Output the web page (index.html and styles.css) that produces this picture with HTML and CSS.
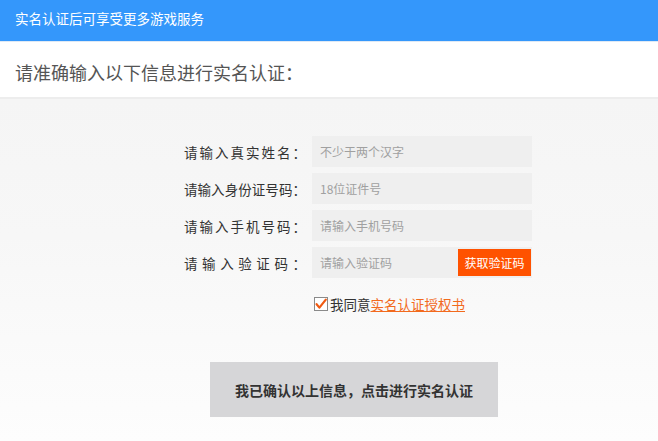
FILE: index.html
```html
<!DOCTYPE html>
<html lang="zh-CN">
<head>
<meta charset="utf-8">
<title>实名认证</title>
<link rel="stylesheet" href="styles.css">
</head>
<body>
<header class="topbar">实名认证后可享受更多游戏服务</header>
<section class="intro">请准确输入以下信息进行实名认证：</section>
<main class="content">
  <form class="form">
    <div class="row">
      <label class="label">请输入真实姓名：</label>
      <div class="field"><input class="input" placeholder="不少于两个汉字"></div>
    </div>
    <div class="row">
      <label class="label">请输入身份证号码：</label>
      <div class="field"><input class="input" placeholder="18位证件号"></div>
    </div>
    <div class="row">
      <label class="label">请输入手机号码：</label>
      <div class="field"><input class="input" placeholder="请输入手机号码"></div>
    </div>
    <div class="row">
      <label class="label">请输入验证码：</label>
      <div class="field">
        <input class="input" placeholder="请输入验证码">
        <button type="button" class="code-btn">获取验证码</button>
      </div>
    </div>
    <div class="agree">
      <svg class="check" width="14" height="14" viewBox="0 0 14 14">
        <rect x="0.5" y="0.5" width="13" height="13" fill="#fff" stroke="#8a8a8a"/>
        <path d="M2.6 7.2 L5.4 10.6 L11.8 2.6" fill="none" stroke="#f05a12" stroke-width="2.2" stroke-linecap="round" stroke-linejoin="round"/>
      </svg>
      <span>我同意</span><a class="link" href="#">实名认证授权书</a>
    </div>
  </form>
  <div class="submit-wrap">
    <button type="button" class="submit">我已确认以上信息，点击进行实名认证</button>
  </div>
</main>
</body>
</html>
```

FILE: styles.css
```css
* { box-sizing: border-box; }
html, body {
  margin: 0;
  padding: 0;
  height: 100%;
}
body {
  font-family: "Noto Sans CJK SC", "Noto Sans", sans-serif;
  display: flex;
  flex-direction: column;
  background: #fdfdfd;
  overflow: hidden;
}
.topbar {
  height: 42px;
  background: #3497fb;
  color: #fff;
  font-size: 13.5px;
  line-height: 36px;
  padding-left: 15px;
  border-bottom: 1px solid #dfe9f4;
  flex: none;
}
.intro {
  height: 57px;
  background: #fff;
  color: #555;
  font-size: 18px;
  line-height: 60px;
  padding-left: 15px;
  border-bottom: 2px solid #ededed;
  flex: none;
}
.content {
  flex: 1;
  background: linear-gradient(#f5f5f5, #f7f7f7 40%, #fdfdfd);
  padding-top: 37px;
}
.form {
  margin-left: 184px;
  width: 348px;
  display: flex;
  flex-direction: column;
  gap: 6px;
}
.row {
  display: flex;
  align-items: center;
  height: 31px;
}
.label {
  width: 122px;
  font-size: 13.5px;
  color: #333;
  text-align: justify;
  text-align-last: justify;
  white-space: nowrap;
  margin-right: 6px;
}
.field {
  width: 220px;
  height: 31px;
  background: #efefef;
  display: flex;
  align-items: center;
  padding-right: 1px;
}
.input {
  flex: 1;
  min-width: 0;
  height: 100%;
  border: 0;
  outline: 0;
  background: transparent;
  padding: 0 8px;
  font-family: inherit;
  font-size: 12px;
  color: #333;
}
.input::placeholder { color: #a0a0a0; }
.code-btn {
  width: 73px;
  height: 27px;
  border: 0;
  background: #ff5200;
  color: #fff;
  font-family: inherit;
  font-size: 12px;
  padding: 0;
  flex: none;
}
.agree {
  margin-top: 11px;
  margin-left: 130px;
  display: flex;
  align-items: center;
  font-size: 13.5px;
  color: #333;
  height: 18px;
}
.check {
  margin-right: 2px;
  flex: none;
}
.link {
  color: #f26a1d;
  text-decoration: underline;
}
.submit-wrap {
  margin-top: 49px;
  margin-left: 210px;
}
.submit {
  width: 288px;
  height: 55px;
  border: 0;
  background: #d6d6d8;
  color: #333;
  font-family: "Noto Sans CJK SC", serif;
  font-weight: bold;
  font-size: 14px;
  padding: 0;
}
```
